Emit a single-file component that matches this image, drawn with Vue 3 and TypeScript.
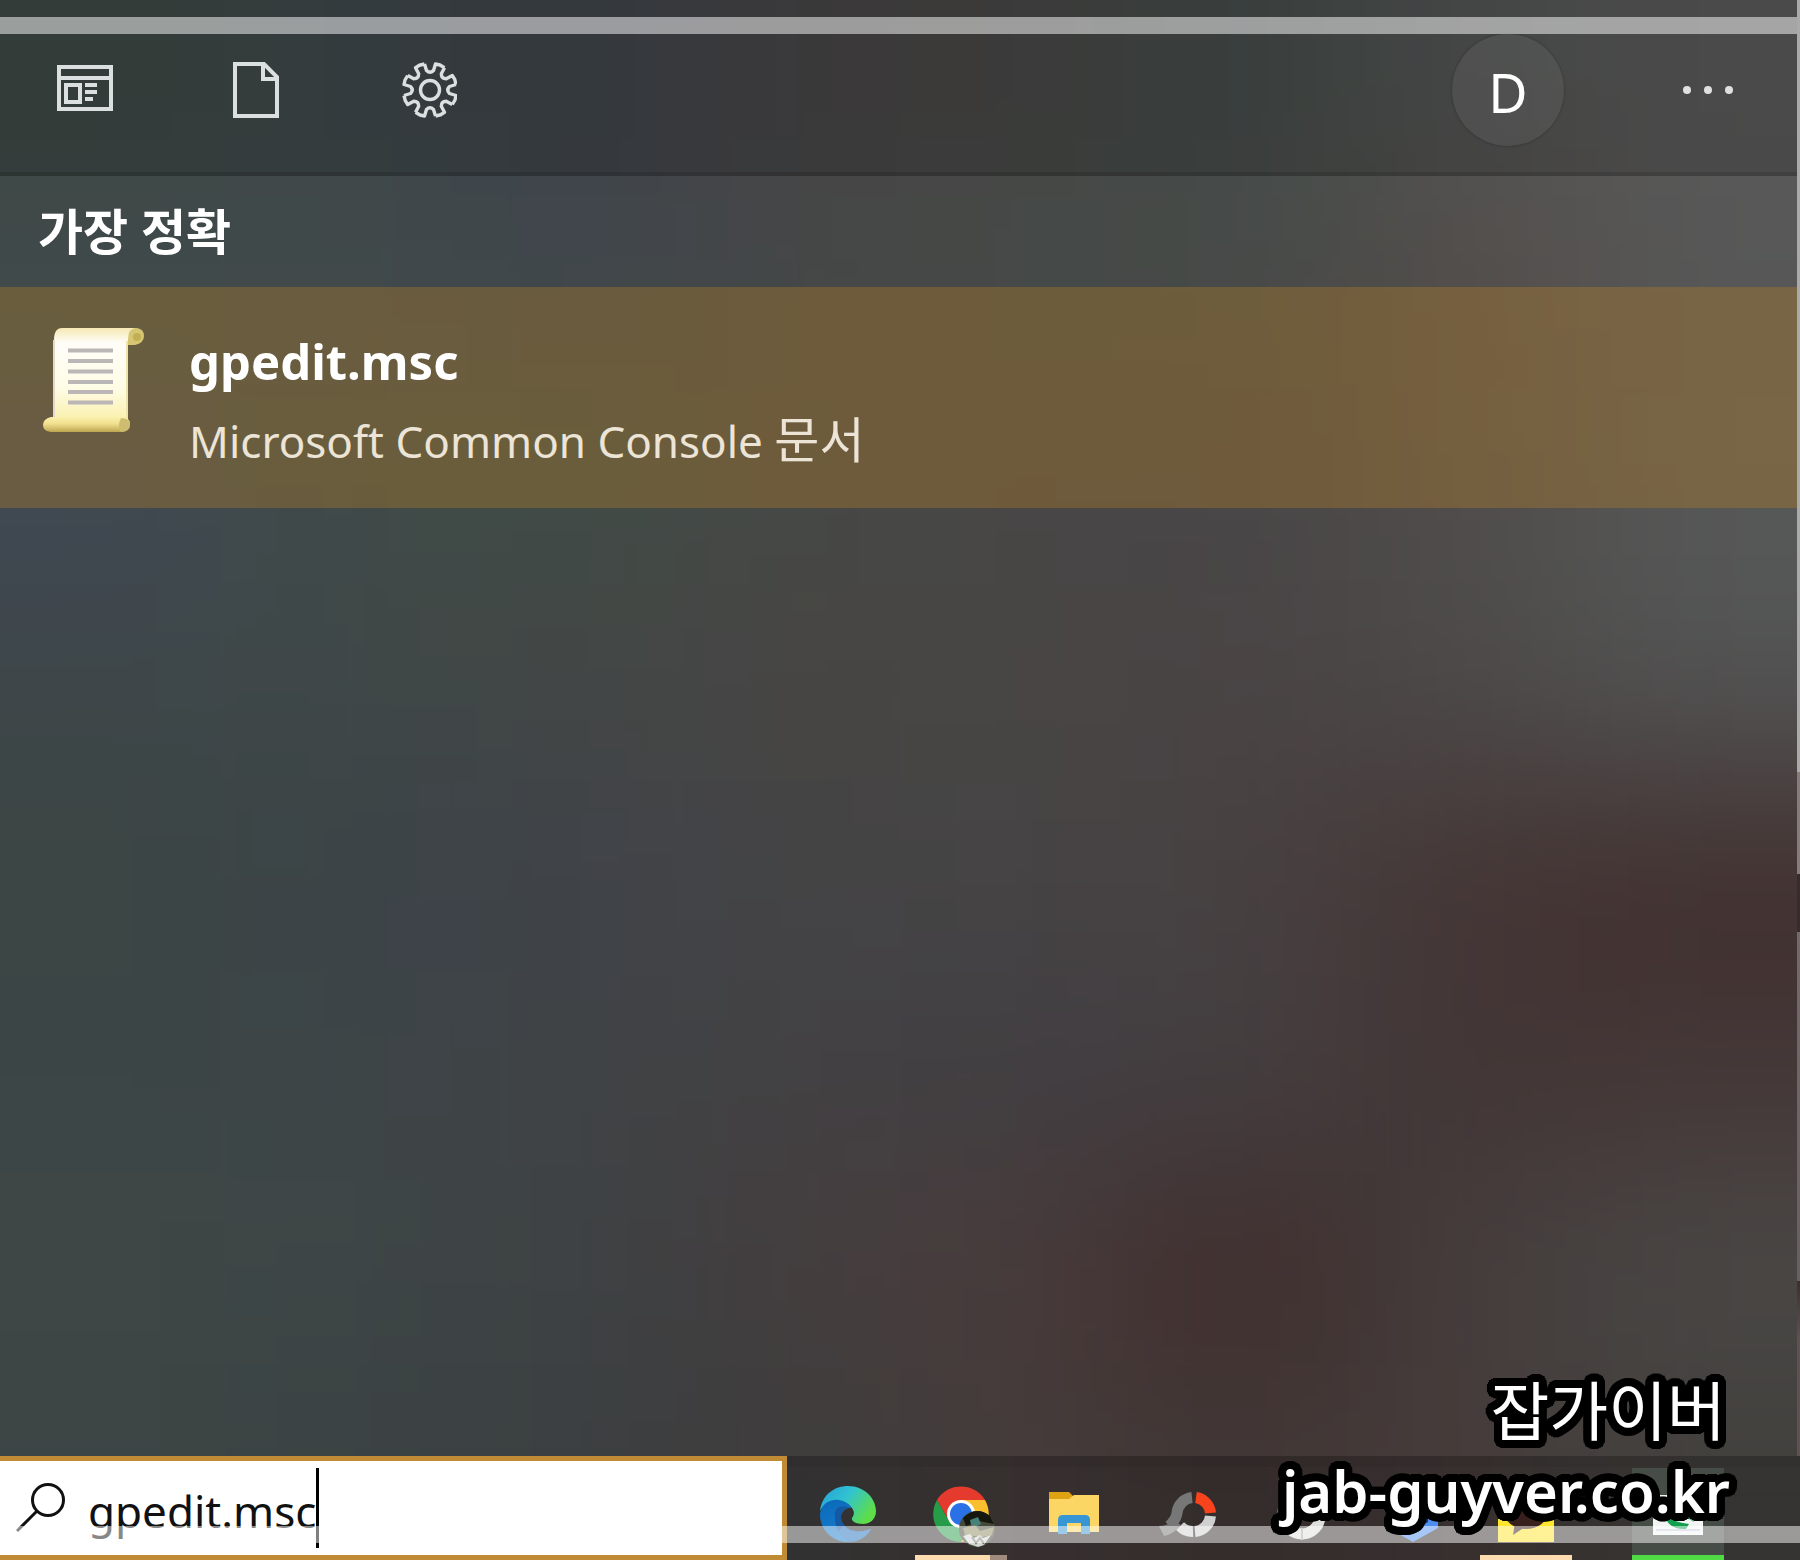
<script setup lang="ts">
import { ref } from 'vue'

const query = ref('gpedit.msc')
const filters = ['앱', '문서', '설정']
const apps = [
  { id: 'browser', name: 'Microsoft Edge', state: '' },
  { id: 'chrome', name: 'Chrome', state: 'open grouped' },
  { id: 'folder', name: '파일 탐색기', state: '' },
  { id: 'ring', name: 'ring', state: '' },
  { id: 'disc', name: 'disc', state: '' },
  { id: 'hex', name: 'hex', state: '' },
  { id: 'talk', name: '카카오톡', state: 'open' },
  { id: 'monitor', name: 'monitor', state: 'open active' },
]
const gearAngles = Array.from({ length: 8 }, (_, i) => i * 45)

// Acrylic backdrop: coarse colour cells, blurred into each other
const tones = [
  ['3f4845', '3f484a', '3d434c', '474546', '474645', '434b49', '525453', '595959'],
  ['404a4a', '41494a', '40474c', '454748', '454a46', '464a48', '544c48', '575757'],
  ['404954', '404a48', '3f4c46', '464946', '484646', '484648', '504d4b', '575858'],
  ['3e4649', '3f4848', '434645', '474543', '484644', '4a4344', '4c4a49', '535454'],
  ['3c4643', '3b4347', '3f434a', '444446', '464445', '484142', '443534', '41302f'],
  ['3c4547', '3d4548', '3f4345', '434143', '403e42', '443f41', '433535', '443737'],
  ['3f4845', '3e4646', '3d4244', '443d3e', '4a3c3c', '3f2b2a', '443e3d', '4a4846'],
  ['3c4445', '3b4243', '3b3f41', '3e3d3d', '443c3b', '403735', '463c3b', '42403d'],
]
const cells = tones.flatMap((row, r) =>
  row.map((tone, c) => {
    const x = c === 0 ? -3 : c
    const y = r === 0 ? -3 : r
    return { x, y, w: (c === 7 ? 11 : c + 1) - x, h: (r === 7 ? 11 : r + 1) - y, fill: '#' + tone }
  }),
)
</script>

<template>
  <div class="desktop">
    <svg class="backdrop" viewBox="0 0 8 8" preserveAspectRatio="none" aria-hidden="true">
      <filter id="soften" filterUnits="userSpaceOnUse" x="-2" y="-2" width="12" height="12" color-interpolation-filters="sRGB">
        <feGaussianBlur stdDeviation="0.45" />
      </filter>
      <g filter="url(#soften)" shape-rendering="crispEdges">
        <rect v-for="(c, i) in cells" :key="i" :x="c.x" :y="c.y" :width="c.w" :height="c.h" :fill="c.fill" />
      </g>
    </svg>

    <header class="toolbar">
      <nav class="filters">
        <button v-for="(f, i) in filters" :key="f" class="tool" :aria-label="f">
          <svg v-if="i === 0" width="56" height="56" viewBox="0 0 56 56" fill="none" stroke="#dcdfe0" stroke-width="4">
            <path d="M2 5h52v42H2zM2 16h52" />
            <path d="M9 23h14v17H9zM28 23h12M28 30h12M28 37h8" />
          </svg>
          <svg v-else-if="i === 1" width="56" height="56" viewBox="1 0 56 56" fill="none" stroke="#dcdfe0" stroke-width="4">
            <path d="M7 2h29l13 13v39H7zM35 2v15h14" />
          </svg>
          <svg v-else width="56" height="56" viewBox="-29 -28 56 56" fill="none" stroke="#dcdfe0" stroke-width="3.4" stroke-linejoin="round">
            <circle r="9.5" />
            <path
              v-for="a in gearAngles"
              :key="a"
              :transform="`rotate(${a})`"
              d="M-5.500 -26L-3.500 -19.500Q0 -16 3.500 -19.500L5.500 -26L10 -25L14.500 -22.300"
            />
          </svg>
        </button>
      </nav>
      <div class="account">
        <button class="tool avatar">D</button>
        <button class="tool" aria-label="옵션">
          <svg width="56" height="56" viewBox="0 0 56 56" fill="#e0e0e0">
            <circle cx="7" cy="28" r="4" /><circle cx="28" cy="28" r="4" /><circle cx="49" cy="28" r="4" />
          </svg>
        </button>
      </div>
    </header>

    <main class="results">
      <h2>가장 정확</h2>
      <a class="match" href="#gpedit">
        <svg width="102" height="106" viewBox="0 0 102 106">
          <defs>
            <linearGradient id="paper" x1="0" y1="0" x2="0" y2="1">
              <stop offset="0" stop-color="#f6e9b4" /><stop offset=".15" stop-color="#fffdf8" />
              <stop offset=".6" stop-color="#fffce6" /><stop offset="1" stop-color="#f8ec9e" />
            </linearGradient>
            <linearGradient id="roll" x1="0" y1="0" x2="0" y2="1">
              <stop offset="0" stop-color="#fbf2ae" /><stop offset=".45" stop-color="#f1df8e" /><stop offset="1" stop-color="#bda650" />
            </linearGradient>
          </defs>
          <path d="M84 1h10q7 1 7 8t-9 9h-8z" fill="#d6c671" />
          <circle cx="94" cy="10" r="4" fill="#c0af55" />
          <path d="M19 1h73q-7 1-7 12v88H11V13Q11 1 19 1z" fill="url(#paper)" />
          <path d="M11 13v80" stroke="#e2d8cc" stroke-width="2" />
          <path d="M84 14v80" stroke="#eee2ad" stroke-width="2" />
          <path d="M25 23.500h45M25 34h45M25 44.500h45M25 55h45M25 65h45M25 75.500h45" stroke="#bab7b6" stroke-width="4" />
          <path d="M8 90h70q9 0 9 7t-9 8H8Q0 104 0 98t8-8z" fill="url(#roll)" />
          <path d="M78 91q9 0 9 7t-9 7q-4-6 0-14z" fill="#cebc70" />
        </svg>
        <span class="labels">
          <strong>gpedit.msc</strong>
          <span>Microsoft Common Console <span class="kind">문서</span></span>
        </span>
      </a>
    </main>

    <footer class="taskbar">
      <label class="search">
        <svg width="50" height="50" viewBox="0 0 50 50" fill="none" stroke="#111" stroke-width="3">
          <circle cx="32" cy="17" r="15.500" /><path d="M21 28L1 48" />
        </svg>
        <input v-model="query" type="text" aria-label="검색" />
        <span class="caret"></span>
      </label>
      <div class="apps">
        <button v-for="app in apps" :key="app.id" class="app" :class="app.state" :aria-label="app.name">
          <svg v-if="app.id === 'browser'" width="60" height="60" viewBox="-30 -30 60 60">
            <defs>
              <linearGradient id="wave" x1="0" y1="0" x2="1" y2=".5">
                <stop offset="0" stop-color="#249ed8" /><stop offset=".5" stop-color="#31c3d1" /><stop offset="1" stop-color="#5ddd4a" />
              </linearGradient>
              <linearGradient id="deep" x1="0" y1="0" x2=".5" y2="1">
                <stop offset="0" stop-color="#0a68b8" /><stop offset="1" stop-color="#1a80d2" />
              </linearGradient>
            </defs>
            <path d="M-28-3C-26-20-13-28 0-28C17-28 28-15 28-3C28 6 21 10 15 10C8 10 3 7 4 4C7 0 6-3 4-6C-5-18-22-14-28-3z" fill="url(#wave)" />
            <path d="M-28 0C-26-12-16-15-9-14C-3-13 1-10 4-6C-2-7-7-2-7 4C-6 15 8 21 23 15C17 26 4 30-8 27C-20 23-28 13-28 0z" fill="url(#deep)" />
            <path d="M-13 0C-13-7-6-10 2-6C-3-7-7-2-7 4C-6 15 8 21 23 15C19 23 9 28 1 28C-9 24-14 12-13 0z" fill="#1459a2" />
            <path d="M-4 12C4 20 14 18 23 15C17 25 8 28 1 28C-5 26-8 22-10 17z" fill="#2c86d4" opacity=".6" />
          </svg>
          <svg v-else-if="app.id === 'chrome'" width="72" height="70" viewBox="-36 -35 72 70">
            <path d="M-24-14A28 28 0 0 1 24-14L0-14L-12 7z" fill="#e53a2e" />
            <path d="M-24-14A28 28 0 0 0 0 28L12 7L-12 7z" fill="#279c48" />
            <path d="M24-14A28 28 0 0 1 0 28L12 7L0-14z" fill="#f9bf2f" />
            <circle r="14" fill="#fff" /><circle r="11" fill="#2a70e6" />
            <circle cx="16" cy="15" r="18" fill="#45493a" />
            <path d="M2 4Q15-9 29 2L33 10L18 7L5 12z" fill="#15180f" />
            <path d="M9 6l8-3 3 7-9 5z" fill="#46817a" />
            <path d="M2 14l12-3 5 6 14-4-2 8-9 2-18-2z" fill="#8f8b60" />
            <path d="M2 22l7-2 4 4 6-3 3 3 8-3-7 10-6 2-9-3z" fill="#d8d8d4" />
            <path d="M11 23l4 6 4-5 4 6" stroke="#777c72" stroke-width="2" fill="none" />
          </svg>
          <svg v-else-if="app.id === 'folder'" width="52" height="44" viewBox="0 0 52 44">
            <path d="M1 0h20l4 4h26v8H1z" fill="#dda313" /><path d="M1 7h20l5-4h25v37H1z" fill="#fbd664" />
            <path d="M10 42V28q0-5 5-5h22q5 0 5 5v14h-9V31H19v11z" fill="#3996d5" />
          </svg>
          <svg v-else-if="app.id === 'ring'" width="64" height="52" viewBox="-36 -26 64 52">
            <g fill="none" stroke-width="11">
              <path d="M5-16.500A17 17 0 0 1 19.500-1" stroke="#f8431c" />
              <path d="M19.500 2A17 17 0 0 1 4 17.500M2 17.500A17 17 0 0 1-11 12" stroke="#d0d0d0" />
              <path d="M1-16.500A17 17 0 0 0-14-1Q-15 6-22 12" stroke="#777" />
            </g>
            <path d="M-32 12l5 10q10-2 17-11l-8-5q-5 6-14 6z" fill="#777" />
          </svg>
          <svg v-else-if="app.id === 'disc'" width="52" height="52" viewBox="-28 -28 52 52">
            <circle r="18" fill="none" stroke="#dededc" stroke-width="11" />
            <path d="M-18 8A18 18 0 0 1-4-18" fill="none" stroke="#666" stroke-width="11" />
            <path d="M0 12v12" stroke="#aaa" stroke-width="2" />
          </svg>
          <svg v-else-if="app.id === 'hex'" width="50" height="56" viewBox="0 0 50 56">
            <path d="M25 0l25 14v28L25 56 0 42V14z" fill="#4d8ff0" /><path d="M25 12l15 8v16l-15 9-15-9V20z" fill="#17345e" />
          </svg>
          <svg v-else-if="app.id === 'talk'" width="56" height="56" viewBox="0 0 56 56">
            <path d="M0 0h56v56H0z" fill="#ffe52c" /><ellipse cx="28" cy="26" rx="22" ry="17" fill="#38201c" />
            <path d="M17 36l-2 13 12-8z" fill="#38201c" />
          </svg>
          <svg v-else width="52" height="44" viewBox="0 0 52 44">
            <path d="M1 3h50v40H1z" fill="#f2f5f4" /><path d="M15 2h7v5h-7z" fill="#3a4cb4" />
            <path d="M13 23q8 7 24 9l-3 5q-18 1-21-14z" fill="#12a04f" /><path d="M28 22h14v8z" fill="#55bb88" />
            <path d="M4 38h44" stroke="#ccd" stroke-width="2" />
          </svg>
        </button>
      </div>
    </footer>

    <div class="band upper"></div>
    <div class="band lower"></div>
    <div class="edge"></div>
    <div class="credit">
      <span>잡가이버</span>
      <a href="#home">jab-guyver.co.kr</a>
    </div>
  </div>
</template>

<style>
body {
  margin: 0;
  background: #444;
}
</style>

<style scoped>
.desktop {
  position: relative;
  z-index: 0;
  display: flex;
  flex-direction: column;
  min-height: 100vh;
  overflow: hidden;
  font-family: "Noto Sans", "Noto Sans CJK KR", sans-serif;
  color: #fff;
}
.backdrop {
  position: absolute;
  z-index: -1;
  inset: 0;
  width: 100%;
  height: 100%;
}
button {
  margin: 0;
  padding: 0;
  border: 0;
  background: none;
  color: inherit;
  font: inherit;
}
.toolbar {
  display: flex;
  justify-content: space-between;
  padding: 34px 36px 26px 29px;
  border-bottom: 4px solid rgba(0, 0, 0, 0.12);
  background: rgba(0, 0, 0, 0.16);
}
.filters,
.account {
  display: flex;
  gap: 60px;
}
.account {
  gap: 88px;
}
.tool {
  display: flex;
  align-items: center;
  justify-content: center;
  box-sizing: border-box;
  width: 112px;
  height: 112px;
}
.avatar {
  padding-top: 4px;
  border-radius: 50%;
  background: rgba(255, 255, 255, 0.06);
  box-shadow: 0 0 2px 1px rgba(0, 0, 0, 0.15);
  font-size: 54px;
}
.results {
  flex: 1;
}
h2 {
  margin: 0;
  padding: 0 38px;
  font-size: 49px;
  font-weight: 700;
  line-height: 111px;
}
.match {
  display: flex;
  align-items: flex-start;
  gap: 44px;
  padding: 40px 43px 0;
  height: 181px;
  background: rgba(184, 130, 40, 0.35);
  color: #fff;
  text-decoration: none;
}
.labels {
  display: flex;
  flex-direction: column;
  font-size: 44px;
  line-height: 80px;
  color: #ece4d6;
}
.labels strong {
  margin-top: -6px;
  font-size: 49px;
  color: #fff;
}
.labels span {
  font-weight: 400;
}
.labels .kind {
  font-size: 49px;
  line-height: 1;
}
.taskbar {
  display: flex;
  height: 104px;
  background: linear-gradient(rgba(0, 0, 0, 0.25) 11px, rgba(0, 0, 0, 0.2) 11px);
}
.search {
  display: flex;
  align-items: center;
  box-sizing: border-box;
  flex: 0 0 787px;
  padding-left: 16px;
  border: 5px solid #c18b36;
  border-left: 0;
  background: #fff;
}
.search input {
  field-sizing: content;
  margin: 0;
  padding: 5px 0 0 22px;
  border: 0;
  outline: 0;
  background: none;
  color: #111;
  font: 44px/80px "Noto Sans", "Noto Sans CJK KR", sans-serif;
}
.caret {
  width: 3px;
  height: 80px;
  background: #000;
}
.apps {
  display: flex;
  flex: 1;
  gap: 21px;
  padding: 12px 0 0 15px;
}
.app {
  display: flex;
  align-items: center;
  justify-content: center;
  box-sizing: border-box;
  width: 92px;
  padding-top: 4px;
  border-bottom: 5px solid transparent;
}
.app.open {
  border-color: #fcdcae;
}
.app.grouped {
  border-image: linear-gradient(90deg, #fcdcae 72px, #9f8c7d 72px) 5;
}
.app.active {
  margin-left: 39px;
  border-color: #4edb43;
  background: #464d47;
}
.band {
  position: absolute;
  right: 0;
  left: 0;
  height: 17px;
  background: rgba(255, 255, 255, 0.5);
  pointer-events: none;
}
.upper {
  top: 17px;
}
.lower {
  bottom: 17px;
}
.edge {
  position: absolute;
  top: 0;
  right: 0;
  bottom: 104px;
  width: 3px;
  background: linear-gradient(#aaa 53%, #877c7c 53%, #877c7c 60%, #382b2b 60%, #382b2b 64%, #746a6b 64%, #685f61 88%, #3b302f 88%, #5c5352 92%);
}
.credit {
  position: absolute;
  right: 70px;
  bottom: 29px;
  display: flex;
  flex-direction: column;
  align-items: flex-end;
  font-size: 58px;
  font-weight: 600;
  line-height: 80px;
  -webkit-text-stroke: 8px #000;
  paint-order: stroke fill;
  text-shadow:
    8px 0 #000, 8px 2px #000, 7px 4px #000, 6px 6px #000, 4px 7px #000, 2px 8px #000,
    0 8px #000, -2px 8px #000, -4px 7px #000, -6px 6px #000, -7px 4px #000, -8px 2px #000,
    -8px 0 #000, -8px -2px #000, -7px -4px #000, -6px -6px #000, -4px -7px #000, -2px -8px #000,
    0 -8px #000, 2px -8px #000, 4px -7px #000, 6px -6px #000, 7px -4px #000, 8px -2px #000,
    5px 0 #000, 4px 4px #000, 0 5px #000, -4px 4px #000,
    -5px 0 #000, -4px -4px #000, 0 -5px #000, 4px -4px #000;
}
.credit span {
  padding-right: 4px;
  font-size: 64px;
  font-weight: 400;
}
.credit a {
  color: #fff;
  text-decoration: none;
}
</style>
